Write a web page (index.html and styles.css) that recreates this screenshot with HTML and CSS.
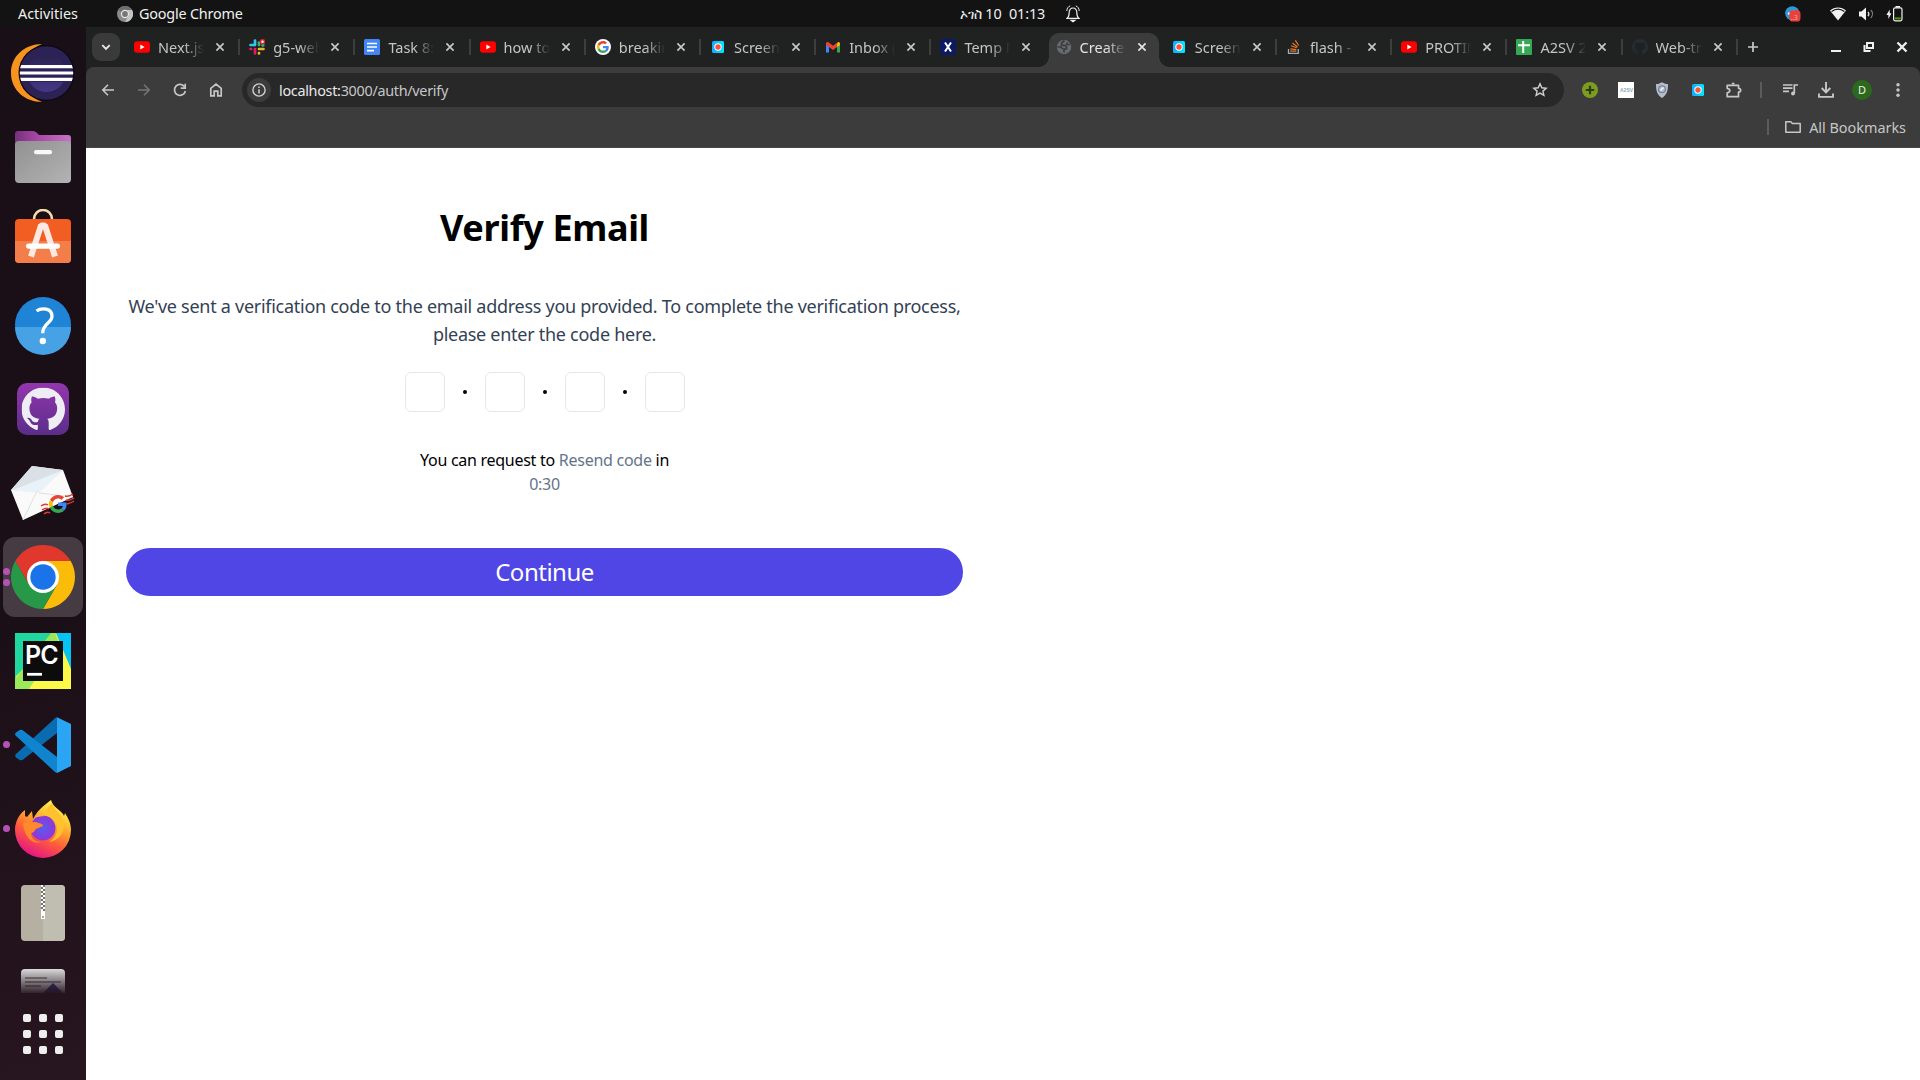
FILE: index.html
```html
<!DOCTYPE html>
<html lang="en">
<head>
<meta charset="utf-8">
<title>Verify Email</title>
<link rel="stylesheet" href="styles.css">
</head>
<body>
<svg class="defs" width="0" height="0" aria-hidden="true">
  <defs>
    <linearGradient id="g-cam" x1="0" y1="0" x2="1" y2="0"><stop offset="0" stop-color="#12a8ff"/><stop offset="1" stop-color="#00eaff"/></linearGradient>
  </defs>
  <symbol id="i-close" viewBox="0 0 12 12"><path d="M2.4 2.4l7.2 7.2M9.6 2.4L2.4 9.6" stroke="currentColor" stroke-width="1.7" fill="none"/></symbol>
  <symbol id="i-youtube" viewBox="0 0 16 16"><rect y="2.2" width="16" height="11.6" rx="3" fill="#f00"/><path d="M6.3 5.5v5L10.6 8z" fill="#fff"/></symbol>
  <symbol id="i-camera" viewBox="0 0 16 16"><rect x="2" y="2" width="12" height="12" rx="1.5" fill="url(#g-cam)"/><circle cx="8" cy="8" r="3.7" fill="#fff"/><circle cx="8" cy="8" r="2.7" fill="#ff4f3d"/></symbol>
  <symbol id="i-octocat" viewBox="0 0 16 16"><path fill="currentColor" d="M8 0C3.58 0 0 3.58 0 8c0 3.54 2.29 6.53 5.47 7.59.4.07.55-.17.55-.38 0-.19-.01-.82-.01-1.49-2.01.37-2.53-.49-2.69-.94-.09-.23-.48-.94-.82-1.13-.28-.15-.68-.52-.01-.53.63-.01 1.08.58 1.23.82.72 1.21 1.87.87 2.33.66.07-.52.28-.87.51-1.07-1.78-.2-3.64-.89-3.64-3.95 0-.87.31-1.59.82-2.15-.08-.2-.36-1.02.08-2.12 0 0 .67-.21 2.2.82.64-.18 1.32-.27 2-.27s1.36.09 2 .27c1.53-1.04 2.2-.82 2.2-.82.44 1.1.16 1.92.08 2.12.51.56.82 1.27.82 2.15 0 3.07-1.87 3.75-3.65 3.95.29.25.54.73.54 1.48 0 1.07-.01 1.93-.01 2.2 0 .21.15.46.55.38A8.01 8.01 0 0016 8c0-4.42-3.58-8-8-8z"/></symbol>
  <symbol id="i-google" viewBox="0 0 48 48"><path fill="#EA4335" d="M24 9.5c3.54 0 6.71 1.22 9.21 3.6l6.85-6.85C35.9 2.38 30.47 0 24 0 14.62 0 6.51 5.38 2.56 13.22l7.98 6.19C12.43 13.72 17.74 9.5 24 9.5z"/><path fill="#4285F4" d="M46.98 24.55c0-1.57-.15-3.09-.38-4.55H24v9.02h12.94c-.58 2.96-2.26 5.48-4.78 7.18l7.73 6c4.51-4.18 7.09-10.36 7.09-17.65z"/><path fill="#FBBC05" d="M10.53 28.59a14.5 14.5 0 010-9.18l-7.98-6.19a24 24 0 000 21.56l7.98-6.19z"/><path fill="#34A853" d="M24 48c6.48 0 11.93-2.13 15.89-5.81l-7.73-6c-2.15 1.45-4.92 2.3-8.16 2.3-6.26 0-11.57-4.22-13.47-9.91l-7.98 6.19C6.51 42.62 14.62 48 24 48z"/></symbol>
</svg>

<div class="desktop">
  <header class="topbar">
    <div class="topbar-left">
      <span class="activities">Activities</span>
      <svg class="app-icon" width="16" height="16" viewBox="0 0 16 16"><circle cx="8" cy="8" r="8" fill="#8b8b8b"/><path d="M8 0a8 8 0 017 4H8a4 4 0 00-3.6 2.2L1.2 3.8A8 8 0 018 0z" fill="#6e6e6e"/><path d="M15 4a8 8 0 01-7 12l3.5-6A4 4 0 0011 5.3L10 4z" fill="#c4c4c4"/><circle cx="8" cy="8" r="4.2" fill="#e4e4e4"/><circle cx="8" cy="8" r="2.9" fill="#777"/></svg>
      <span class="app-name">Google Chrome</span>
    </div>
    <div class="clock"><span class="clock-text">ኦገስ 10&nbsp; 01:13</span>
      <svg width="14" height="18" viewBox="0 0 14 18" fill="none" stroke="#eee" stroke-width="1.2"><path d="M1 13.4h12c-1.6-1-2-2-2.1-5.2C10.800 4.800 9.500 3 7 3S3.200 4.800 3.100 8.200C3 11.400 2.600 12.400 1 13.400z"/><path d="M5.200 15.400h3.600L7 16.700z" fill="#fff"/><path d="M4.200.9C2 1.700.9 3.400.8 6M9.800.9c2.200.8 3.300 2.500 3.400 5.100" stroke-width="1"/></svg>
    </div>
    <div class="tray">
      <svg width="16" height="16" viewBox="0 0 16 16"><circle cx="7.300" cy="7.300" r="7.100" fill="#2a9bd8"/><path d="M2.500 7l7-3-.8 4-5 1z" fill="#fff"/><rect x="4.300" y="4.300" width="11.200" height="11.200" rx="3.600" fill="#e8403a"/><text x="5.500" y="13.600" font-size="6.500" fill="#f6b1ae">..3</text></svg>
      <svg width="16" height="14" viewBox="0 0 16 14"><path d="M0 3.600C4.500-.5 11.500-.5 16 3.600L8 13.500z" fill="#f2f2f2"/><path d="M1.600 4.600c4-3 8.800-3 12.800 0" stroke="#131313" stroke-width="1.300" fill="none"/></svg>
      <svg width="15" height="14" viewBox="0 0 15 14"><path d="M0 4.500h2.500L7 .5v13l-4.500-4H0z" fill="#f2f2f2"/><path d="M9 4.800c1 1.300 1 3.100 0 4.400" stroke="#ddd" stroke-width="1.300" fill="none"/><path d="M11.800 3c2.200 2.300 2.200 5.700 0 8" stroke="#777" stroke-width="1.300" fill="none"/></svg>
      <svg width="17" height="16" viewBox="0 0 17 16"><path d="M3.700 3.500L.4 9h2v4L5.400 7.300H3.700z" fill="#f2f2f2"/><rect x="7.600" y="1.800" width="8.400" height="13" rx="1.500" fill="none" stroke="#f2f2f2" stroke-width="1.200"/><rect x="9.500" width="4.600" height="1.600" fill="#f2f2f2"/><rect x="8.800" y="11.400" width="6" height="2" fill="#4e9a06"/></svg>
    </div>
  </header>

  <div class="workspace">
    <nav class="dock">
      <div class="dock-list">
        <div class="dock-item"><svg width="64" height="64" viewBox="0 0 64 64"><defs><clipPath id="ecl"><circle cx="35.500" cy="32" r="26.700"/></clipPath><linearGradient id="eclg" x1="0" y1="0" x2="0" y2="1"><stop offset="0" stop-color="#2a2250"/><stop offset="1" stop-color="#473788"/></linearGradient></defs><path d="M31 3C14 3 0 15 0 32s14 29 31 29C18 56 10 45 10 32S18 8 31 3z" fill="#f7941e"/><circle cx="35.500" cy="32" r="28" fill="#0d0812"/><circle cx="35.500" cy="32" r="26.700" fill="#2c2255"/><circle cx="35.500" cy="32" r="19" fill="url(#eclg)"/><g clip-path="url(#ecl)"><rect x="8" y="24" width="56" height="17" fill="#2c2255"/><path d="M8 25.700h56M8 32h56M8 38.400h56" stroke="#fff" stroke-width="3.200"/></g></svg></div>
        <div class="dock-item"><svg width="64" height="64" viewBox="0 0 64 64"><defs><linearGradient id="fpu" x1="0" x2="1"><stop offset="0" stop-color="#77307b"/><stop offset=".4" stop-color="#a847a6"/><stop offset="1" stop-color="#c774c5"/></linearGradient><linearGradient id="fgr" x1="0" y1="0" x2="1" y2="1"><stop offset="0" stop-color="#919191"/><stop offset="1" stop-color="#b3b3b3"/></linearGradient></defs><path d="M4 9a3 3 0 013-3h15q2 0 4 2l2 2h29a3 3 0 013 3v10H4z" fill="url(#fpu)"/><rect x="4" y="16" width="56" height="42" rx="4" fill="url(#fgr)"/><rect x="23" y="25" width="18" height="4.300" rx="2" fill="#f8f8f8"/></svg></div>
        <div class="dock-item"><svg width="64" height="64" viewBox="0 0 64 64"><path d="M23 14V10a9 9 0 0118 0v4" fill="none" stroke="#f6dcae" stroke-width="2.600"/><rect x="4" y="10" width="56" height="44" rx="4" fill="#f25d22"/><path d="M4 32h56v18a4 4 0 01-4 4H8a4 4 0 01-4-4z" fill="#f47e4a"/><path d="M20 47.500L30 16.500h4l10 31" stroke="#fde9e1" stroke-width="6" stroke-linejoin="bevel" fill="none"/><rect x="15" y="34.500" width="34" height="5.200" rx="2.600" fill="#fff"/></svg></div>
        <div class="dock-item"><svg width="64" height="64" viewBox="0 0 64 64"><circle cx="32" cy="32" r="28" fill="#1f84d6"/><path d="M4 34h56a28 28 0 01-56 0z" fill="#46a2e4"/><path d="M25.500 18c5-3.500 15.500-3.200 15.500 5.200 0 7-9.300 7-9.300 17" fill="none" stroke="#fff" stroke-width="3.300"/><circle cx="31.800" cy="48" r="3.200" fill="#fff"/></svg></div>
        <div class="dock-item"><svg width="64" height="64" viewBox="0 0 64 64"><defs><linearGradient id="ghd" x1="0" y1="0" x2="0" y2="1"><stop offset="0" stop-color="#9336ad"/><stop offset="1" stop-color="#5a2e8a"/></linearGradient></defs><rect x="6" y="6" width="52" height="52" rx="10" fill="url(#ghd)"/><svg x="10.500" y="10.500" width="43.500" height="43.500" color="#eeedf3"><use href="#i-octocat"/></svg></svg></div>
        <div class="dock-item"><svg width="64" height="64" viewBox="0 0 64 64"><path d="M0 29L21 5l31 4 10 27-50 23z" fill="#fafafa"/><path d="M0 29L21 5l31 4-27 22z" fill="#d9e0e6"/><path d="M2 29l50-20-24 23z" fill="#e8f2f8"/><path d="M12 59l14-29M62 36L28 32" stroke="#e0e0e0" fill="none"/><path d="M30 45q4-3 7-1M31 49q4-3 7-1M33 53q3-3 6-1M54 35q4 1 8-2M55 39q4 1 8-2M56 43q4-1 7-3" stroke="#e2392d" stroke-width="1.500" fill="none"/><use href="#i-google" x="38" y="34" width="18" height="18"/></svg></div>
        <div class="dock-item active"><i class="run two"></i><svg width="64" height="64" viewBox="0 0 64 64"><path d="M4.290 16A32 32 0 0159.700 16L32 16 18.140 40z" fill="#e0382c"/><path d="M59.700 16A32 32 0 0132 64L45.860 40 32 16z" fill="#fbbc09"/><path d="M32 64A32 32 0 014.290 16L18.140 40 45.860 40z" fill="#279847"/><circle cx="32" cy="32" r="16" fill="#fff"/><circle cx="32" cy="32" r="12.700" fill="#1a73e8"/></svg></div>
        <div class="dock-item"><svg width="64" height="64" viewBox="0 0 64 64"><path d="M4 4h56v56H4z" fill="#21d789"/><path d="M42 4h18v36z" fill="#07c3f2"/><path d="M4 48L45 4l15 36v20H17z" fill="#fcf84a"/><path d="M4 50L40 4h4l4 10-30 46H4z" fill="#9be85b"/><path d="M4 4h34L12 40l-8 8z" fill="#21d7a0"/><rect x="12" y="12" width="40" height="40" fill="#0c0c0c"/><text class="pc" x="14" y="34.500">PC</text><path d="M16 45.300h15" stroke="#fff" stroke-width="2.800"/></svg></div>
        <div class="dock-item"><i class="run"></i><svg width="64" height="64" viewBox="0 0 64 64"><path d="M4.500 41.500q-1 1.600.5 3l3.600 2.400q2 .8 3.500-.4L46 20V4.300q-1 .2-2 1z" fill="#0a6cb0"/><path d="M4.500 22.500q-1-1.600.5-3L8.600 17.100q2-.8 3.500.4L46 44v16q-1-.3-2-1z" fill="#1184d0"/><path d="M46 4.200L60 11v42L46 60z" fill="#2aa5f3"/></svg></div>
        <div class="dock-item"><i class="run"></i><svg width="64" height="64" viewBox="0 0 64 64"><defs><linearGradient id="ffx" x1=".8" y1="0" x2=".3" y2="1"><stop offset=".1" stop-color="#fff04a"/><stop offset=".4" stop-color="#ffa72b"/><stop offset=".65" stop-color="#ff5a3c"/><stop offset="1" stop-color="#e3108c"/></linearGradient><radialGradient id="ffb"><stop offset="0" stop-color="#5b5cec"/><stop offset="1" stop-color="#9135d8"/></radialGradient></defs><path d="M40 3c2 7 8 9 12 14l1 2 1-3c3 5 6 10 6 17a28 28 0 01-56 0c0-7 3-15 10-20v6l2 1 5-6 1 8c4-8 10-13 18-19z" fill="url(#ffx)"/><circle cx="32" cy="31" r="12.500" fill="url(#ffb)"/><path d="M12 26c4-2 7-1 11-1 3 0 8 2 9 3-1 3-6 2-8 5-1 3-4 3-4 3 0 6 5 9 10 9-10 3-17-7-18-19z" fill="#ff8a2b"/><path d="M24 20c8-4 20-1 22 9 1 8-3 13-8 16 9-1 15-9 15-17-1-12-9-13-12-22-4 4-7 9-7 13z" fill="#ffc12e"/></svg></div>
        <div class="dock-item"><svg width="64" height="64" viewBox="0 0 64 64"><rect x="10" y="4" width="44" height="56" rx="4" fill="#b5b0a2"/><path d="M32 4h18a4 4 0 014 4v48a4 4 0 01-4 4H32z" fill="#c0beb0"/><path d="M31 4v26M33 6v24" stroke="#fff" stroke-width="2" stroke-dasharray="2 2"/><path d="M31 6v24M33 4v26" stroke="#77736a" stroke-width="2" stroke-dasharray="2 2"/><path d="M30 30h4v8h-4z" fill="#fff"/><path d="M31 35h2v2h-2z" fill="#aaa698"/></svg></div>
        <div class="dock-item last"><svg width="64" height="64" viewBox="0 0 64 64"><rect x="10" y="4" width="44" height="56" rx="4" fill="#dadadc"/><path d="M14 13h22M14 17h36M14 21h16" stroke="#8f8c87" stroke-width="2"/><path d="M32 28l10-10 10 10z" fill="#303b8f"/></svg></div>
      </div>
      <svg class="apps" width="40" height="40" viewBox="0 0 40 40" fill="#eeeeec"><rect width="8" height="8" rx="2"/><rect x="16" width="8" height="8" rx="2"/><rect x="32" width="8" height="8" rx="2"/><rect y="16" width="8" height="8" rx="2"/><rect x="16" y="16" width="8" height="8" rx="2"/><rect x="32" y="16" width="8" height="8" rx="2"/><rect y="32" width="8" height="8" rx="2"/><rect x="16" y="32" width="8" height="8" rx="2"/><rect x="32" y="32" width="8" height="8" rx="2"/></svg>
    </nav>

    <div class="browser">
      <div class="tabstrip">
        <div class="tab-search"><svg width="12" height="12" viewBox="0 0 12 12"><path d="M2.300 4.200L6 7.900l3.700-3.700" fill="none" stroke="#e8e8e8" stroke-width="1.900"/></svg></div>
        <div class="tabs">
          <div class="tab"><svg class="fav"><use href="#i-youtube"/></svg><span>Next.js</span><svg class="x"><use href="#i-close"/></svg></div>
          <div class="tab"><svg class="fav" viewBox="0 0 16 16" fill="none" stroke-width="2.700" stroke-linecap="round"><path d="M1.500 6h4.200M6 1.500v.6" stroke="#36c5f0"/><path d="M6 3v3" stroke="#36c5f0"/><path d="M10 3.500V6M13.500 6.300h.8" stroke="#2eb67d"/><path d="M10 10h4.500M10 14v.4" stroke="#ecb22e"/><path d="M6 10v4.500M1.500 10h.6" stroke="#e01e5a"/><circle cx="13.500" cy="2.800" r="2.800" fill="#e3212b" stroke="none"/><circle cx="13.500" cy="2.800" r="1.200" fill="#fff" stroke="none"/></svg><span>g5-web</span><svg class="x"><use href="#i-close"/></svg></div>
          <div class="tab"><svg class="fav" viewBox="0 0 16 16"><rect width="16" height="16" rx="1.500" fill="#4285f4"/><path d="M3 4.500h10M3 8h10M3 11.700h7" stroke="#fff" stroke-width="1.700"/></svg><span>Task 8: A</span><svg class="x"><use href="#i-close"/></svg></div>
          <div class="tab"><svg class="fav"><use href="#i-youtube"/></svg><span>how to</span><svg class="x"><use href="#i-close"/></svg></div>
          <div class="tab"><svg class="fav" viewBox="0 0 16 16"><circle cx="8" cy="8" r="8" fill="#fff"/><use href="#i-google" x="2" y="2" width="12" height="12"/></svg><span>breakin</span><svg class="x"><use href="#i-close"/></svg></div>
          <div class="tab"><svg class="fav"><use href="#i-camera"/></svg><span>Screen</span><svg class="x"><use href="#i-close"/></svg></div>
          <div class="tab"><svg class="fav" viewBox="0 0 16 16"><path d="M1 4v9.500h3V7z" fill="#4285f4"/><path d="M15 4v9.500h-3V7z" fill="#34a853"/><path d="M12 4.500L13 3q2-.5 2 2v1L12 8z" fill="#fbbc04"/><path d="M1 6V4.500q.5-2 2.500-1.200L8 6.700l4-3V8l-4 3-4-3z" fill="#ea4335"/></svg><span>Inbox (1</span><svg class="x"><use href="#i-close"/></svg></div>
          <div class="tab"><svg class="fav" viewBox="0 0 16 16"><rect width="16" height="16" rx="3" fill="#0b1a63"/><path d="M5 3.500l6 9M11 3.500l-6 9" stroke="#fff" stroke-width="2"/></svg><span>Temp M</span><svg class="x"><use href="#i-close"/></svg></div>
          <div class="tab current"><svg class="fav" viewBox="0 0 16 16"><circle cx="8" cy="8" r="7.200" fill="#686b70"/><path d="M8.500 1.500L5.500 4v2.300H9L10.500 8v2H8v3.500M1.500 8h3.300l2 2M11 3.500v2h3" stroke="#3c3c3c" stroke-width="1.700" fill="none"/></svg><span>Create </span><svg class="x"><use href="#i-close"/></svg></div>
          <div class="tab"><svg class="fav"><use href="#i-camera"/></svg><span>Screen</span><svg class="x"><use href="#i-close"/></svg></div>
          <div class="tab"><svg class="fav" viewBox="0 0 16 16" fill="none"><path d="M2.500 10v4.300h9.800V10" stroke="#a5a9ad" stroke-width="1.300"/><path d="M4.300 12.200h6M4.300 9.800l6 .8M5 6.800l5.700 2M6.500 4l5 4M9.300 1.300l3.400 5.200" stroke="#e87722" stroke-width="1.200"/></svg><span>flash - G</span><svg class="x"><use href="#i-close"/></svg></div>
          <div class="tab"><svg class="fav"><use href="#i-youtube"/></svg><span>PROTIN</span><svg class="x"><use href="#i-close"/></svg></div>
          <div class="tab"><svg class="fav" viewBox="0 0 16 16"><rect width="16" height="16" rx="1" fill="#34a853"/><path d="M2 6.200h12M7.200 2v12" stroke="#fff" stroke-width="2"/></svg><span>A2SV 2</span><svg class="x"><use href="#i-close"/></svg></div>
          <div class="tab"><svg class="fav dim"><use href="#i-octocat"/></svg><span>Web-tr</span><svg class="x"><use href="#i-close"/></svg></div>
        </div>
        <svg class="new-tab" width="12" height="12" viewBox="0 0 12 12"><path d="M6 1v10M1 6h10" stroke="#c8caca" stroke-width="1.700"/></svg>
        <div class="window-buttons">
          <svg width="12" height="12" viewBox="0 0 12 12"><path d="M1 10h10" stroke="#f0f0f0" stroke-width="2"/></svg>
          <svg width="12" height="12" viewBox="0 0 12 12" fill="none" stroke="#f0f0f0" stroke-width="2"><path d="M4 2h6v5H4zM1.500 4v6h6"/></svg>
          <svg width="12" height="12" viewBox="0 0 12 12"><path d="M1.500 1.500l9 9M10.500 1.500l-9 9" stroke="#f0f0f0" stroke-width="2.300"/></svg>
        </div>
      </div>

      <div class="chrome-panel">
        <div class="toolbar">
          <div class="nav-buttons">
            <svg width="16" height="16" viewBox="0 0 16 16" fill="none" stroke="#c7c7c7" stroke-width="1.600"><path d="M14 8H3M8 2.800L2.800 8 8 13.200"/></svg>
            <svg width="16" height="16" viewBox="0 0 16 16" fill="none" stroke="#757575" stroke-width="1.600"><path d="M2 8h11M8 2.800L13.200 8 8 13.200"/></svg>
            <svg width="16" height="16" viewBox="0 0 16 16" fill="none" stroke="#c7c7c7" stroke-width="1.700"><path d="M12.700 5A5.500 5.500 0 1013.400 9"/><path d="M13.200 1.800v4.400H8.700"/></svg>
            <svg width="16" height="16" viewBox="0 0 16 16" fill="none" stroke="#c7c7c7" stroke-width="1.700"><path d="M2.800 6.300L8 2.200l5.200 4.100v7.600H9.800V9.200H6.200v4.700H2.800z"/></svg>
          </div>
          <div class="omnibox">
            <div class="site-info"><svg width="14" height="14" viewBox="0 0 14 14"><circle cx="7" cy="7" r="6.100" fill="none" stroke="#d0d0d0" stroke-width="1.400"/><path d="M7 6.200v4.200M7 3.500v1.600" stroke="#d0d0d0" stroke-width="1.500"/></svg></div>
            <span class="url"><b>localhost:</b>3000/auth/verify</span>
            <svg width="16" height="16" viewBox="0 0 16 16"><path d="M8 1.800l1.800 4 4.400.4-3.300 2.900 1 4.300L8 11.100l-3.900 2.300 1-4.300L1.800 6.200l4.400-.4z" fill="none" stroke="#d0d0d0" stroke-width="1.400"/></svg>
          </div>
          <div class="extensions">
            <svg viewBox="0 0 16 16"><circle cx="8" cy="8" r="8" fill="#7c9c20"/><path d="M8 3.800v8.400M3.800 8h8.400" stroke="#2e3a14" stroke-width="2.200"/></svg>
            <svg viewBox="0 0 16 16"><path d="M0 0h16v16H0z" fill="#fff"/><text class="tiny" x="2" y="9.800">A2SV</text></svg>
            <svg viewBox="0 0 16 16"><path d="M8 .2c2.200 1.400 4 1.800 6 1.800 0 6.500-.8 10.500-6 14C2.800 12.500 2 8.500 2 2 4 2 5.800 1.600 8 .2z" fill="#b4bccb"/><circle cx="8" cy="7.200" r="3.400" fill="none" stroke="#79859d" stroke-width="1.300"/><path d="M6.500 8.500l3-3" stroke="#f1f3f7" stroke-width="1.600"/></svg>
            <svg><use href="#i-camera"/></svg>
            <svg viewBox="0 0 16 16" fill="none" stroke="#c7c7c7" stroke-width="1.700"><path d="M1.200 3.300h11.300v3q2.200.2 2.200 1.900T12.500 10v4.700H1.200v-3.900q2.600-.4 2.600-2.200T1.200 6.400z" stroke-linejoin="round"/><path d="M5.500 2.500q0-2 1.600-2t1.600 2z" fill="#c7c7c7" stroke="none"/></svg>
          </div>
          <i class="divider"></i>
          <div class="actions">
            <svg viewBox="0 0 16 16" fill="none" stroke="#c7c7c7" stroke-width="1.700"><path d="M1 3h9.500M1 6.200h9.500M1 9.400h6"/><path d="M12.300 11.500V3H16"/><circle cx="11" cy="11.500" r="1.900" fill="#c7c7c7" stroke="none"/></svg>
            <svg viewBox="0 0 16 16" fill="none" stroke="#c7c7c7" stroke-width="1.900"><path d="M8 0v10M3.700 6L8 10.300 12.300 6M1 11.500v3.400h14v-3.400"/></svg>
            <span class="avatar">D</span>
            <svg viewBox="0 0 16 16" fill="#c7c7c7"><circle cx="8" cy="2.700" r="1.700"/><circle cx="8" cy="8" r="1.700"/><circle cx="8" cy="13.300" r="1.700"/></svg>
          </div>
        </div>
        <div class="bookmarks">
          <i class="divider"></i>
          <svg width="16" height="12" viewBox="0 0 16 12"><path d="M.8.800h5l1.600 1.700h7.800v8.700H.8z" fill="none" stroke="#c7c7c7" stroke-width="1.500" stroke-linejoin="round"/></svg>
          <span>All Bookmarks</span>
        </div>
      </div>

      <main class="page">
        <section class="verify">
          <h1>Verify Email</h1>
          <p class="lead">We've sent a verification code to the email address you provided. To complete the verification process, please enter the code here.</p>
          <div class="otp"><i class="box"></i><i class="dot"></i><i class="box"></i><i class="dot"></i><i class="box"></i><i class="dot"></i><i class="box"></i></div>
          <p class="resend">You can request to <span>Resend code</span> in<br><span>0:30</span></p>
          <button class="continue" type="button">Continue</button>
        </section>
      </main>
    </div>
  </div>
</div>
</body>
</html>
```
FILE: styles.css
```css
* { box-sizing: border-box; }
body { margin: 0; background: #131313; font-family: "Noto Sans", "Open Sans", sans-serif; }
svg { display: block; flex: none; }
.defs { position: absolute; }
.desktop { width: 1920px; height: 1080px; display: flex; flex-direction: column; overflow: hidden; }

/* system bar */
.topbar { height: 27px; flex: none; display: grid; grid-template-columns: 960px 1fr auto; align-items: center; background: #131313; color: #f0f0f0; font-size: 14.4px; line-height: 26px; }
.topbar-left { display: flex; align-items: center; padding-left: 18px; }
.activities { width: 99px; }
.app-name { padding-left: 6px; letter-spacing: -.2px; }
.clock { display: flex; align-items: center; }
.clock-text { width: 106px; letter-spacing: -.1px; white-space: nowrap; }
.tray { display: flex; align-items: center; padding-right: 17px; }
.tray svg:nth-child(1) { margin-right: 29px; }
.tray svg:nth-child(2) { margin-right: 13px; }
.tray svg:nth-child(3) { margin-right: 12px; }

.workspace { flex: 1; display: flex; min-height: 0; }

/* dock */
.dock { width: 86px; flex: none; display: flex; flex-direction: column; align-items: center; background: linear-gradient(165deg, #190f17 0%, #1b0f17 55%, #27151f 100%); }
.dock-list { height: 966px; width: 80px; padding-top: 6px; display: flex; flex-direction: column; gap: 4px; overflow: hidden; }
.dock-item { position: relative; flex: none; width: 80px; height: 80px; border-radius: 12px; display: grid; place-items: center; }
.dock-item.active { background: #463b43; }
.dock-item.last { -webkit-mask-image: linear-gradient(#000 12px, transparent 38px); mask-image: linear-gradient(#000 12px, transparent 38px); }
.run { position: absolute; left: 0; top: 36px; width: 7px; height: 7px; border-radius: 50%; background: #b552b5; }
.run.two { top: 31px; box-shadow: 0 11px #b552b5; }
.pc { font: 600 25px "Inter", sans-serif; fill: #fff; letter-spacing: -1px; }
.apps { margin-top: 21px; }

/* browser */
.browser { flex: 1; display: flex; flex-direction: column; min-width: 0; background: #202221; }
.tabstrip { height: 40px; flex: none; display: flex; align-items: flex-start; padding: 6px 0 0 6px; }
.tab-search { width: 28px; height: 28px; border-radius: 9px; background: #3a3a3a; display: grid; place-items: center; }
.tabs { width: 1612.800px; margin-left: 4px; display: grid; grid-template-columns: repeat(14, 1fr); }
.tab { position: relative; height: 34px; padding: 0 0 6px 10px; display: flex; align-items: center; color: #c4c6c5; font-size: 14.500px; }
.tab span { width: 47px; margin-left: 8px; overflow: hidden; white-space: nowrap; line-height: 28px; -webkit-mask-image: linear-gradient(90deg, #000 55%, transparent 98%); mask-image: linear-gradient(90deg, #000 55%, transparent 98%); }
.fav { width: 16px; height: 16px; }
.dim { color: #262c34; }
.x { width: 12px; height: 12px; margin-left: 9px; }
.tab::after { content: ""; position: absolute; right: -1px; top: 6px; width: 2px; height: 16px; background: #3d3f3e; }
.tab.current { color: #e3e3e3; }
.tab.current::before { content: ""; position: absolute; inset: 0 2px 0 3px; border-radius: 10px 10px 0 0; background: #3c3c3c; }
.tab.current > * { position: relative; }
.tab.current::after { top: auto; right: -8px; bottom: 0; left: -7px; width: auto; height: 10px; background: radial-gradient(circle at 0 0, transparent 9.500px, #3c3c3c 10px) left / 10px 10px no-repeat, radial-gradient(circle at 100% 0, transparent 9.500px, #3c3c3c 10px) right / 10px 10px no-repeat; }
.tab:nth-child(8)::after { display: none; }
.new-tab { margin: 8px 0 0 10px; }
.window-buttons { margin: 8px 12px 0 auto; display: flex; gap: 21px; }

.chrome-panel { height: 81px; flex: none; border-radius: 8px 8px 0 0; background: #3c3c3c; border-bottom: 1px solid #484848; }
.toolbar { height: 46px; display: flex; align-items: center; padding: 0 14px; }
.nav-buttons { display: flex; gap: 20px; }
.omnibox { width: 1324px; height: 34px; margin-left: 18px; border-radius: 17px; background: #282828; display: flex; align-items: center; padding: 0 16px 0 5px; }
.site-info { width: 24px; height: 24px; border-radius: 50%; background: #3c3c3c; display: grid; place-items: center; }
.url { flex: 1; margin-left: 8px; color: #c7c7c7; font-size: 14.400px; letter-spacing: -.3px; }
.url b { font-weight: 400; color: #e8e8e8; }
.extensions { display: flex; gap: 20px; margin-left: 18px; }
.extensions svg, .actions svg { width: 16px; height: 16px; }
.tiny { font: 700 5px "Liberation Sans", sans-serif; fill: #8fa9bd; }
.divider { width: 2px; height: 16px; background: #5c5c5c; }
.extensions + .divider { margin: 0 20px 0 18px; }
.actions { display: flex; align-items: center; gap: 20px; }
.avatar { width: 20px; height: 20px; margin: 0 -2px; border-radius: 50%; background: #2c681d; color: #e9f0e5; font-size: 11px; line-height: 20px; text-align: center; }
.bookmarks { height: 28px; display: flex; align-items: center; justify-content: flex-end; padding-right: 14px; color: #c7c7c7; font-size: 14.400px; }
.bookmarks svg { margin: 0 8px 0 16px; }

/* page */
.page { flex: 1; display: grid; grid-template-columns: 1fr 1fr; background: #fff; }
.verify { padding: 60px 40px 0; display: flex; flex-direction: column; align-items: center; text-align: center; }
.verify h1 { margin: 0; font-size: 36px; line-height: 40px; font-weight: 700; letter-spacing: -.35px; color: #000; }
.verify p { margin: 0; }
.verify .lead { margin-top: 44px; font-size: 18px; line-height: 28px; letter-spacing: -.275px; color: #334155; }
.otp { margin-top: 24px; display: flex; align-items: center; gap: 18px; }
.box { width: 40px; height: 40px; border: 1px solid #e2e8f0; border-radius: 6px; }
.dot { width: 4px; height: 4px; border-radius: 50%; background: #000; }
.verify .resend { margin-top: 36px; font-size: 16px; line-height: 24px; letter-spacing: -.27px; color: #000; }
.resend span { color: #64748b; }
.continue { width: 100%; height: 48px; margin-top: 52px; border: 0; border-radius: 24px; background: #4f46e5; color: #fff; font: 400 24px/32px "Noto Sans", sans-serif; letter-spacing: -.5px; }
```
